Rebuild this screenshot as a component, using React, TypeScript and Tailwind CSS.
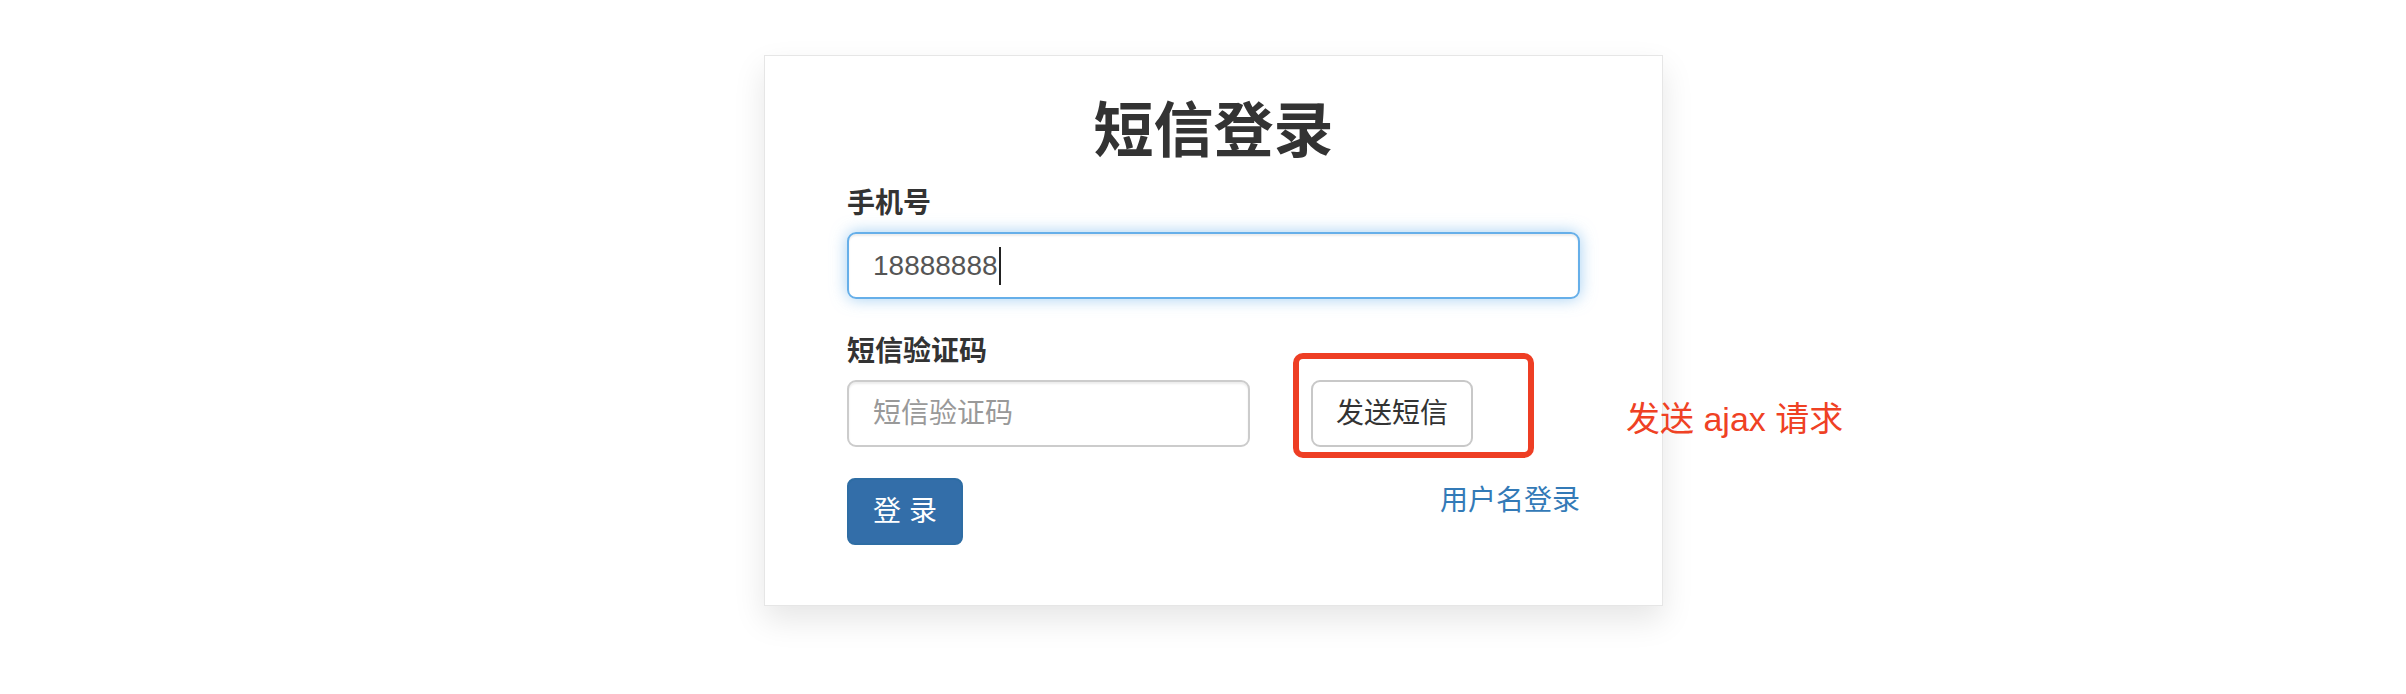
const font = "font-['Liberation_Sans','Noto_Sans_CJK_SC',sans-serif]";

function Label({ children }: { children: string }) {
  return (
    <div className="text-[28px] leading-[28px] font-bold text-[#333]">{children}</div>
  );
}

export default function App() {
  return (
    <div className={`min-h-[694px] bg-white pt-[55px] pl-[764px] ${font}`}>
      <div className="relative w-[899px] border border-[#e6e6e6] bg-white px-[82px] pt-[46px] pb-[60px] shadow-[0_14px_30px_rgba(0,0,0,0.10)]">
        <h2 className="text-center text-[60px] leading-[60px] font-bold text-[#333]">短信登录</h2>

        <div className="mt-[28px]">
          <Label>手机号</Label>
          <div className="mt-[14px] flex h-[67px] items-center rounded-[9px] border-2 border-[#66afe9] px-[24px] text-[28px] text-[#555] shadow-[inset_0_2px_2px_rgba(0,0,0,0.075),0_0_16px_rgba(102,175,233,0.6)]">
            <span>18888888</span>
            <span className="ml-[1px] h-[38px] w-[2px] bg-[#222]" />
          </div>
        </div>

        <div className="mt-[39px]">
          <Label>短信验证码</Label>
          <div className="mt-[14px] flex items-center">
            <div className="flex h-[67px] w-[403px] items-center rounded-[9px] border-2 border-[#ccc] px-[24px] text-[28px] text-[#999] shadow-[inset_0_2px_2px_rgba(0,0,0,0.075)]">
              短信验证码
            </div>
            <div className="relative ml-[61px]">
              <button className="h-[67px] w-[162px] rounded-[9px] border-2 border-[#c8c8c8] bg-white text-[28px] text-[#333]">
                发送短信
              </button>
              <div className="absolute left-[-18px] top-[-27px] h-[105px] w-[241px] rounded-[10px] border-[6px] border-[#ee3e24]" />
            </div>
          </div>
        </div>

        <div className="mt-[31px] flex items-start justify-between">
          <button className="h-[67px] w-[116px] rounded-[8px] border-2 border-[#2e6da4] bg-[#336ea9] text-[28px] text-white">
            登 录
          </button>
          <a className="mt-[6px] text-[28px] leading-[34px] text-[#337ab7]">用户名登录</a>
        </div>

        <div className="absolute left-[861px] top-[343px] whitespace-nowrap text-[34px] leading-[40px] text-[#ef4124]">
          发送 ajax 请求
        </div>
      </div>
    </div>
  );
}
